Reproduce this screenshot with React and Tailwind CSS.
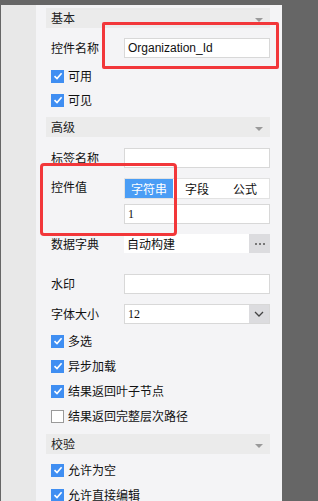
import React from 'react';

const font = { fontFamily: '"Noto Sans CJK SC", "Liberation Sans", sans-serif' };

const Header = ({ title, className = '' }) => (
  <div className={`flex h-[20px] items-center justify-between bg-[#ebebeb] pl-[5px] pr-[7px] text-[12px] text-[#222] ${className}`}>
    <span>{title}</span>
    <span className="mt-[3px] h-0 w-0 border-x-[4px] border-t-[4px] border-x-transparent border-t-[#9a9a9a]" />
  </div>
);

const Check = ({ label, checked = true, className = '' }) => (
  <div className={`flex h-[20px] items-center pl-[5px] text-[12px] text-[#111] ${className}`}>
    {checked ? (
      <span className="flex h-[13px] w-[13px] items-center justify-center bg-[#3f8ef2]">
        <svg width="10" height="10" viewBox="0 0 10 10">
          <path d="M1.5 5.2 L4 7.6 L8.6 2.2" fill="none" stroke="#fff" strokeWidth="1.6" />
        </svg>
      </span>
    ) : (
      <span className="h-[13px] w-[13px] border border-[#9a9a9a] bg-white" />
    )}
    <span className="ml-[4px]">{label}</span>
  </div>
);

const Row = ({ label, children, className = '' }) => (
  <div className={`flex items-center pl-[5px] text-[12px] text-[#111] ${className}`}>
    <span className="w-[73px] shrink-0">{label}</span>
    <div className="flex-1">{children}</div>
  </div>
);

const Input = ({ value = '', mono = false }) => (
  <div
    className="flex h-[20px] items-center border border-[#d8d8d8] bg-white pl-[3px] text-[12px] text-[#111]"
    style={mono ? { fontFamily: '"Liberation Serif", serif' } : { fontFamily: '"Liberation Sans", sans-serif' }}
  >
    {value}
  </div>
);

export default function App() {
  return (
    <div className="relative flex h-[501px] w-[318px] flex-col overflow-hidden bg-[#666666]" style={font}>
      <div className="h-[5px] shrink-0" />
      <div className="flex flex-1">
        <div className="ml-[1px] w-[35px] bg-[#e8e8e8]" />
        <div className="w-[246px] bg-[#f4f4f6] pl-[10px] pr-[12px]">
          <Header title="基本" className="mt-[3px]" />
          <Row label="控件名称" className="mt-[10px]">
            <Input value="Organization_Id" />
          </Row>
          <Check label="可用" className="mt-[8px]" />
          <Check label="可见" className="mt-[4px]" />
          <Header title="高级" className="mt-[7px]" />
          <Row label="标签名称" className="mt-[11px]">
            <Input />
          </Row>
          <div className="mt-[10px] flex pl-[5px] text-[12px] text-[#111]">
            <span className="w-[73px] shrink-0 leading-[18px]">控件值</span>
            <div className="flex-1">
              <div className="flex h-[21px] border border-[#e2e2e2] bg-white">
                <span className="flex w-[48px] items-center justify-center bg-[#4a9df5] text-white">字符串</span>
                <span className="flex flex-1 items-center justify-center">字段</span>
                <span className="flex flex-1 items-center justify-center">公式</span>
              </div>
              <div className="mt-[5px]">
                <Input value="1" mono />
              </div>
            </div>
          </div>
          <Row label="数据字典" className="mt-[10px]">
            <div className="flex h-[19px]">
              <div className="flex flex-1 items-center bg-white pl-[3px]">自动构建</div>
              <div className="flex w-[21px] items-center justify-center gap-[2px] bg-[#dcdcdf]">
                <span className="h-[2px] w-[2px] bg-[#777]" />
                <span className="h-[2px] w-[2px] bg-[#777]" />
                <span className="h-[2px] w-[2px] bg-[#777]" />
              </div>
            </div>
          </Row>
          <Row label="水印" className="mt-[21px]">
            <Input />
          </Row>
          <Row label="字体大小" className="mt-[10px]">
            <div className="flex h-[20px] border border-[#d8d8d8] bg-white">
              <div className="flex flex-1 items-center pl-[3px]" style={{ fontFamily: '"Liberation Serif", serif' }}>12</div>
              <div className="flex w-[20px] items-center justify-center bg-[#dcdcdf]">
                <svg width="10" height="6" viewBox="0 0 10 6">
                  <path d="M1 1 L5 5 L9 1" fill="none" stroke="#444" strokeWidth="1.3" />
                </svg>
              </div>
            </div>
          </Row>
          <Check label="多选" className="mt-[7px]" />
          <Check label="异步加载" className="mt-[5px]" />
          <Check label="结果返回叶子节点" className="mt-[5px]" />
          <Check label="结果返回完整层次路径" checked={false} className="mt-[5px]" />
          <Header title="校验" className="mt-[8px]" />
          <Check label="允许为空" className="mt-[6px]" />
          <Check label="允许直接编辑" className="mt-[5px]" />
        </div>
      </div>
      <div className="pointer-events-none absolute left-[102px] top-[22px] h-[47px] w-[177px] rounded-[2px] border-[3px] border-[#f2373a]" />
      <div className="pointer-events-none absolute left-[40px] top-[163px] h-[73px] w-[137px] rounded-[4px] border-[3px] border-[#f2373a]" />
    </div>
  );
}
